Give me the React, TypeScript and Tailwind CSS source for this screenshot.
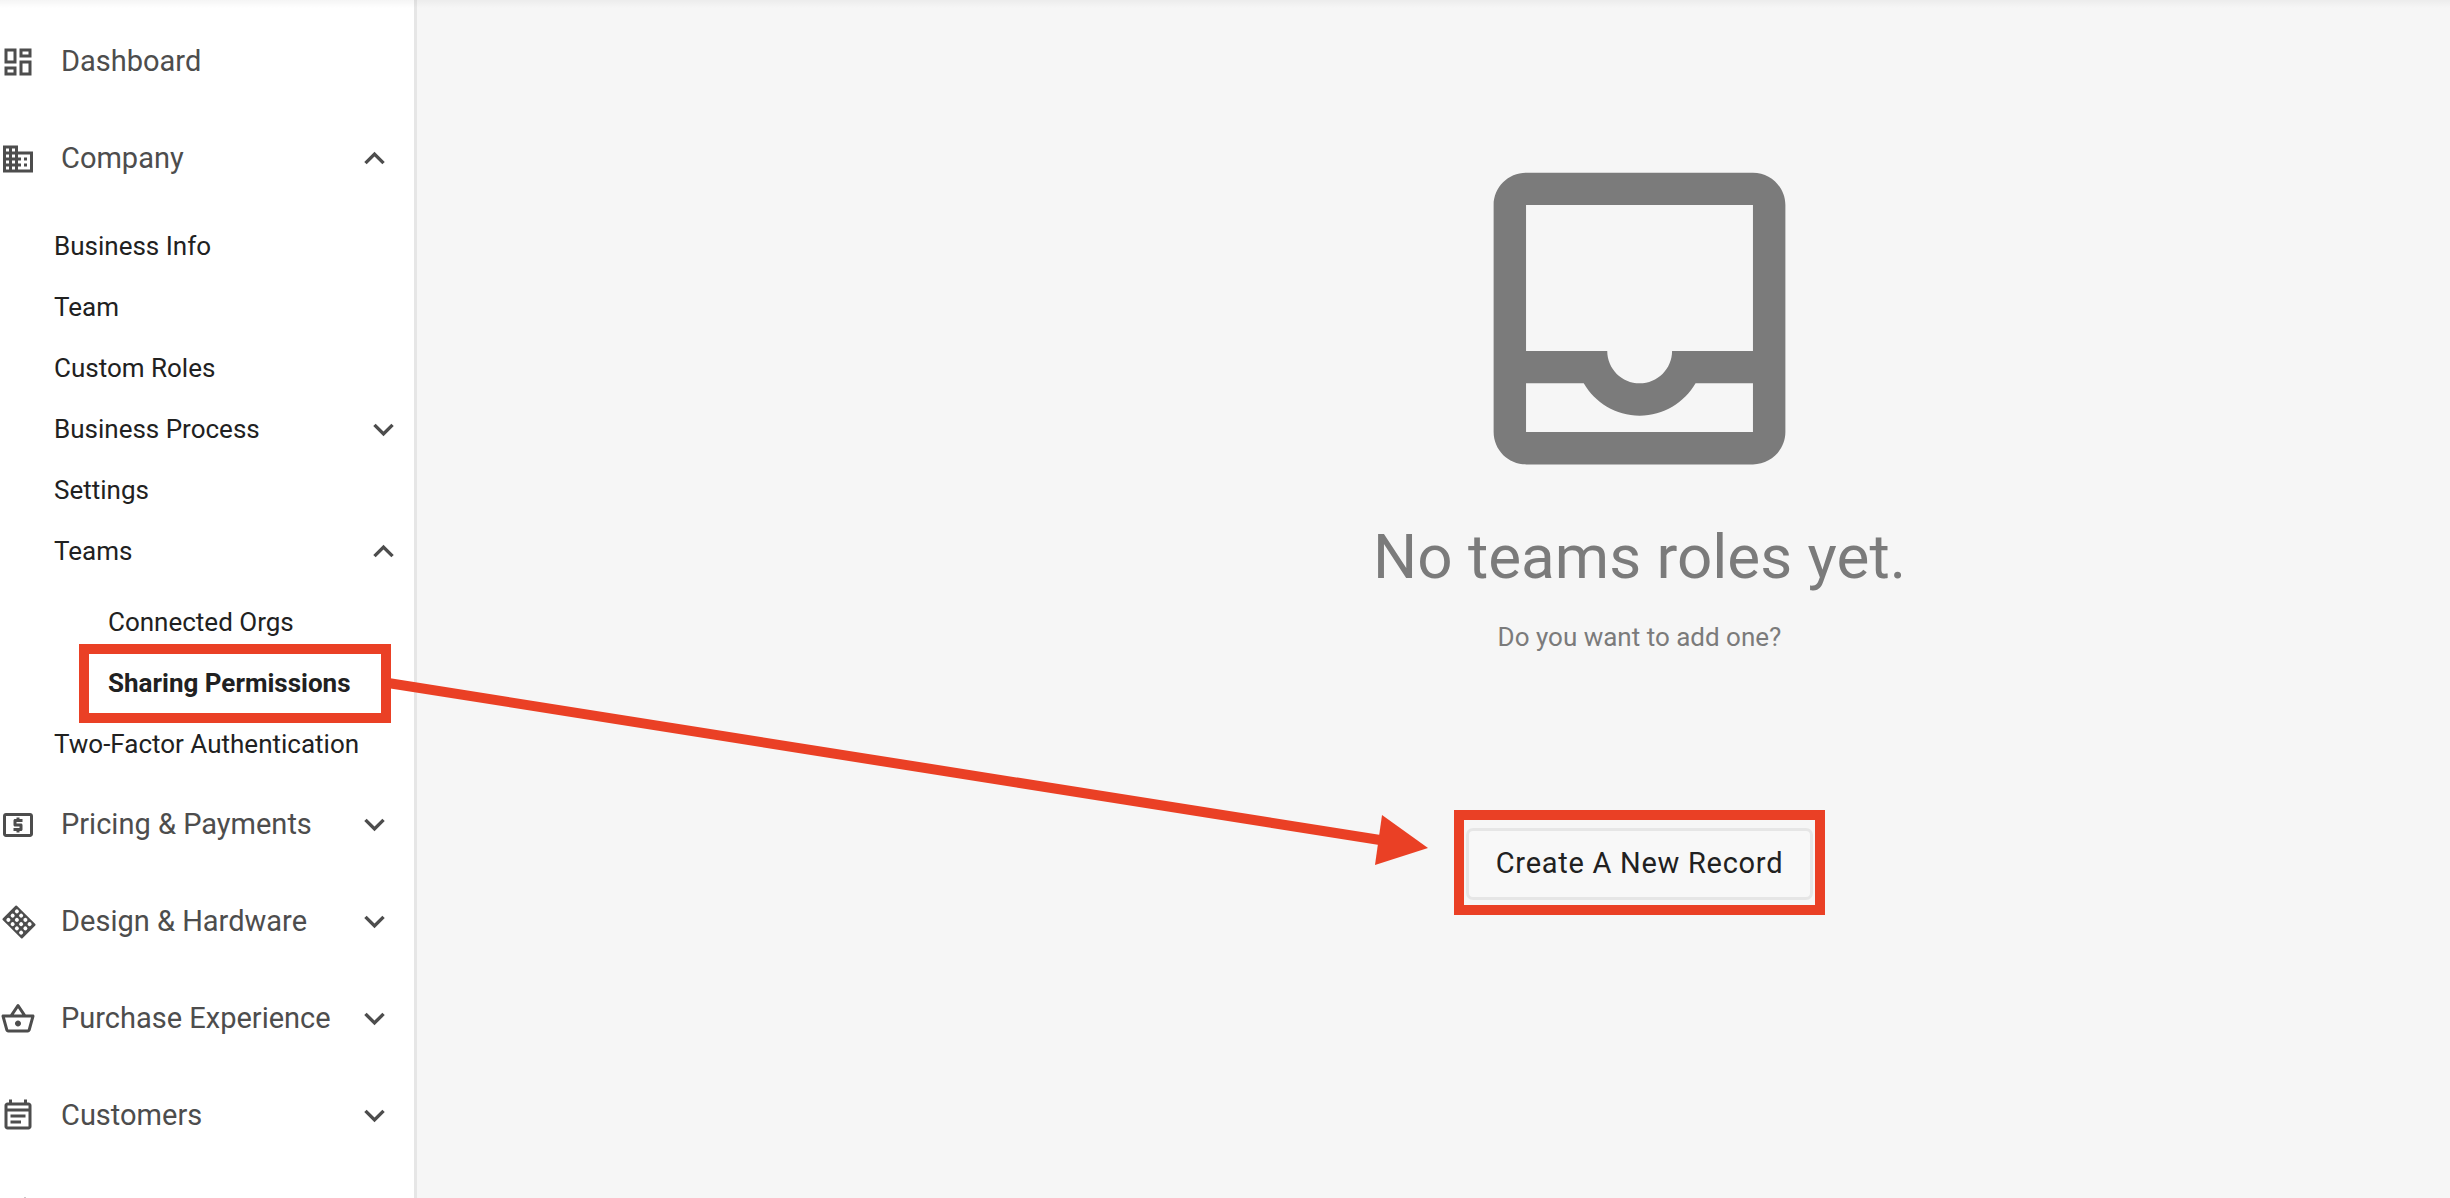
import React from "react";
import {
  MdDomain,
  MdExpandLess,
  MdExpandMore,
  MdLocalAtm,
  MdOutlineDashboard,
  MdOutlineEventNote,
  MdOutlineShoppingBasket,
} from "react-icons/md";

interface SubItem {
  label: string;
  active?: boolean;
  children?: SubItem[];
  collapsible?: boolean;
}

interface Section {
  label: string;
  icon: React.ReactNode;
  collapsible?: boolean;
  items?: SubItem[];
}

const GRID_COLS = [-9, -3, 3, 9];
const GRID_ROWS = [-6, 0, 6];

const HardwareIcon = () => (
  <svg viewBox="0 0 36 36" className="size-9" fill="none" aria-hidden="true">
    <g transform="translate(19 18) rotate(45)">
      <rect x="-14" y="-10" width="28" height="20" rx="1" fill="currentColor" />
      {GRID_COLS.map((x) =>
        GRID_ROWS.map((y) => (
          <circle key={`${x},${y}`} cx={x} cy={y} r="2" fill="white" />
        )),
      )}
    </g>
  </svg>
);

const InboxIcon = () => (
  <svg
    viewBox="0 0 24 24"
    className="size-[389px]"
    fill="currentColor"
    aria-hidden="true"
  >
    <path d="M19 3H5c-1.1 0-2 .9-2 2v14c0 1.1.9 2 2 2h14c1.1 0 2-.9 2-2V5c0-1.1-.9-2-2-2zm0 16H5v-3h3.56c.69 1.19 1.97 2 3.45 2s2.75-.81 3.45-2H19v3zm0-5h-4.99c0 1.1-.9 2-2 2s-2-.9-2-2H5V5h14v9z" />
  </svg>
);

const SECTIONS: Section[] = [
  { label: "Dashboard", icon: <MdOutlineDashboard size={36} /> },
  {
    label: "Company",
    icon: <MdDomain size={36} />,
    collapsible: true,
    items: [
      { label: "Business Info" },
      { label: "Team" },
      { label: "Custom Roles" },
      { label: "Business Process", collapsible: true },
      { label: "Settings" },
      {
        label: "Teams",
        collapsible: true,
        children: [
          { label: "Connected Orgs" },
          { label: "Sharing Permissions", active: true },
        ],
      },
      { label: "Two-Factor Authentication" },
    ],
  },
  {
    label: "Pricing & Payments",
    icon: <MdLocalAtm size={36} />,
    collapsible: true,
  },
  { label: "Design & Hardware", icon: <HardwareIcon />, collapsible: true },
  {
    label: "Purchase Experience",
    icon: <MdOutlineShoppingBasket size={36} />,
    collapsible: true,
  },
  {
    label: "Customers",
    icon: <MdOutlineEventNote size={36} />,
    collapsible: true,
  },
];

const Chevron = ({ open }: { open: boolean }) =>
  open ? (
    <MdExpandLess size={41} className="text-[#4d4d4d]" />
  ) : (
    <MdExpandMore size={41} className="text-[#4d4d4d]" />
  );

const SubRow = ({ item }: { item: SubItem }) => {
  if (item.collapsible) {
    return (
      <li>
        <button
          type="button"
          aria-expanded={!!item.children}
          className="flex h-[61px] w-full items-center justify-between pr-[10px] text-left"
        >
          {item.label}
          <Chevron open={!!item.children} />
        </button>
        {item.children && (
          <ul className="pt-[10px] pl-[54px]">
            {item.children.map((child) => (
              <SubRow key={child.label} item={child} />
            ))}
          </ul>
        )}
      </li>
    );
  }

  return (
    <li className="relative">
      <a
        href="#"
        aria-current={item.active ? "page" : undefined}
        className={`flex h-[61px] items-center ${item.active ? "font-bold" : ""}`}
      >
        {item.label}
      </a>
      {item.active && (
        <div className="pointer-events-none absolute -inset-y-[9px] right-[23px] -left-[29px] border-10 border-[#ea4025]" />
      )}
    </li>
  );
};

const SectionRow = ({ section }: { section: Section }) => (
  <li>
    <button
      type="button"
      aria-expanded={section.collapsible ? !!section.items : undefined}
      className="flex h-[97px] w-full items-center pr-[19px] text-left text-[29px] text-[#4d4d4d]"
    >
      {section.icon}
      <span className="ml-[25px] flex-1">{section.label}</span>
      {section.collapsible && <Chevron open={!!section.items} />}
    </button>
    {section.items && (
      <ul className="pt-[9px] pb-px pl-[54px] text-[26px] text-[#212121]">
        {section.items.map((item) => (
          <SubRow key={item.label} item={item} />
        ))}
      </ul>
    )}
  </li>
);

export default function App() {
  return (
    <div className="relative flex h-screen overflow-hidden bg-[#f6f6f6] font-[Roboto,sans-serif]">
      <nav className="w-[417px] shrink-0 overflow-hidden border-r-3 border-[#e6e6e6] bg-white pt-[13px]">
        <ul>
          {SECTIONS.map((section) => (
            <SectionRow key={section.label} section={section} />
          ))}
          {/* Next section, just below the fold */}
          <li className="flex h-[97px] items-center text-[#4d4d4d]">
            <svg viewBox="0 0 24 24" className="size-9" aria-hidden="true">
              <path d="M16 1.8h1.4V8H16z" fill="currentColor" />
            </svg>
          </li>
        </ul>
      </nav>

      <main className="flex flex-1 flex-col items-center pt-[124px] pl-[412px] text-[#7b7b7b]">
        <InboxIcon />
        <h1 className="mt-2 text-[62px] leading-[72px]">No teams roles yet.</h1>
        <p className="mt-7 text-[26px] leading-8">Do you want to add one?</p>
        <div className="mt-[157px] border-10 border-[#ea4025] px-[2px] pt-2 pb-[5px]">
          <button
            type="button"
            className="h-[72px] rounded-[7px] border-3 border-[#e6e6e6] bg-[#f8f8f8] px-[27px] text-[29px] tracking-wide text-[#212121]"
          >
            Create A New Record
          </button>
        </div>
      </main>

      {/* Callout arrow from the active menu entry to the button */}
      <svg
        width="1440"
        height="880"
        className="pointer-events-none absolute top-0 left-0 text-[#ea4025]"
        aria-hidden="true"
      >
        <path d="M388 683L1380 840" stroke="currentColor" strokeWidth="10" />
        <path d="M1382 815L1428 848L1375 865Z" fill="currentColor" />
      </svg>
      <div className="pointer-events-none absolute inset-x-0 top-0 h-2 bg-linear-to-b from-black/4 to-transparent" />
    </div>
  );
}
